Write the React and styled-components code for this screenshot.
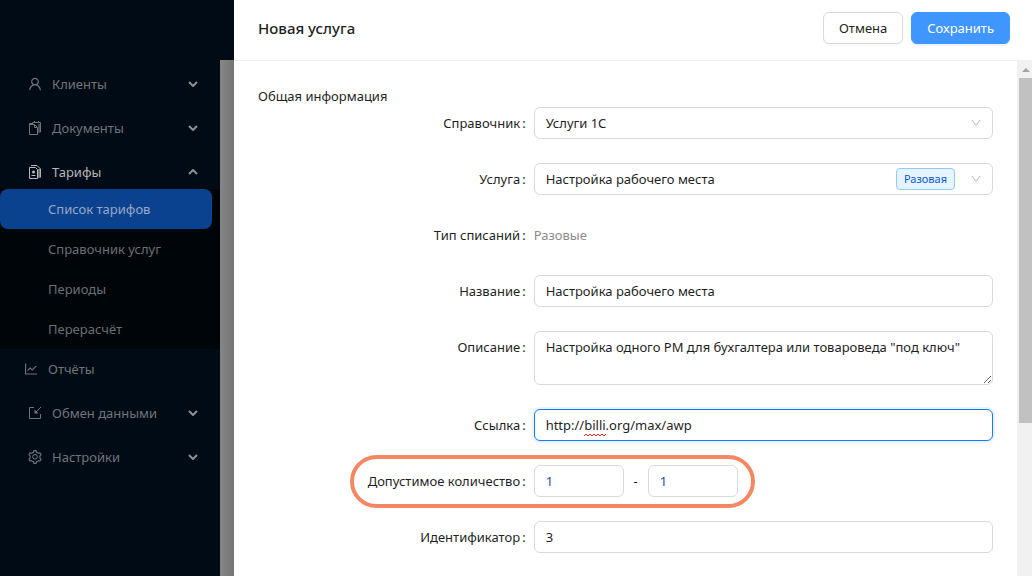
import styled, { createGlobalStyle, css } from 'styled-components'
import {
	AiOutlineUser,
	AiOutlineLineChart,
	AiOutlineSetting,
	AiOutlineDown,
} from 'react-icons/ai'

const GlobalStyle = createGlobalStyle`
	* {
		box-sizing: border-box;
	}

	body {
		margin: 0;
		color: #1f1f1f;
		background: #808080;
		font-family: 'Noto Sans', 'Open Sans', sans-serif;
		font-size: 13px;
		line-height: 22px;
	}

	button, input, select, textarea {
		margin: 0;
		color: inherit;
		font: inherit;
	}
`

const Page = styled.div`
	display: grid;
	grid-template-columns: 220px 14px minmax(0, 1fr);
	grid-template-rows: 60px minmax(0, 1fr);
	height: 100vh;
	overflow: hidden;
	background: linear-gradient(90deg, #858585 220px, #747678 234px);
`

const TopBar = styled.div`
	grid-column: 1 / 3;
	background: #000b15;
`

const SidebarNav = styled.nav`
	grid-row: 2;
	background: #000b15;
`

const Menu = styled.ul`
	margin: 0;
	padding: 2px 0 0;
	list-style: none;
`

const menuItem = css`
	display: flex;
	align-items: center;
	gap: 9px;
	width: 100%;
	border: 0;
	background: none;
	color: #70757a;
	text-align: left;
	text-decoration: none;

	svg {
		flex: none;
		font-size: 16px;
	}
`

const MenuButton = styled.button`
	${menuItem}
	height: 44px;
	padding: 0 22px 0 27px;
	color: ${({ $open }) => ($open ? '#b5b7b9' : '#70757a')};

	span {
		flex: 1;
	}

	svg:last-child {
		color: #8c9196;
		transform: ${({ $open }) => ($open ? 'rotate(180deg)' : 'none')};
	}
`

const MenuLink = styled.a`
	${menuItem}
	height: 40px;
	margin-bottom: 2px;
	padding: 0 23px;
`

const SubMenu = styled.ul`
	margin: -5px 0 0;
	padding: 0;
	background: #000509;
	list-style: none;
`

const SubLink = styled.a`
	display: flex;
	align-items: center;
	height: 40px;
	margin-right: 8px;
	padding-left: 48px;
	border-radius: 8px;
	background: ${({ $active }) => ($active ? '#0b428f' : 'transparent')};
	color: ${({ $active }) => ($active ? '#9aa9c4' : '#6c6f72')};
	text-decoration: none;
`

const Drawer = styled.main`
	display: flex;
	flex-direction: column;
	grid-row: 1 / 3;
	grid-column: 3;
	min-height: 0;
	background: #fff;
`

const Header = styled.header`
	display: flex;
	flex: none;
	align-items: center;
	gap: 8px;
	height: 61px;
	padding: 0 22px 4px 24px;
	border-bottom: 1px solid #efefef;
`

const Title = styled.h1`
	flex: 1;
	margin: 0;
	font-size: 15px;
	font-weight: 500;
`

const Button = styled.button`
	height: 32px;
	padding: 0 15px;
	border: 1px solid ${({ $primary }) => ($primary ? '#4096ff' : '#d9d9d9')};
	border-radius: 6px;
	background: ${({ $primary }) => ($primary ? '#4096ff' : '#fff')};
	color: ${({ $primary }) => ($primary ? '#fff' : '#1f1f1f')};
	box-shadow: 0 2px 0 ${({ $primary }) => ($primary ? '#e9f4ff' : '#fafafa')};
`

const Body = styled.div`
	display: flex;
	flex: 1;
	min-height: 0;
`

const Form = styled.form`
	flex: 1;
	padding: 24px;
`

const FieldRow = styled.div`
	display: grid;
	grid-template-columns: minmax(0, 9fr) minmax(0, 15fr);
	margin-bottom: 24px;
`

const Label = styled.label`
	padding: 5px 8px 5px 0;
	text-align: right;
	white-space: nowrap;

	&::after {
		content: ':';
		margin-left: 2px;
	}
`

const Control = styled.div`
	min-width: 0;
`

const field = css`
	display: block;
	width: 100%;
	height: 32px;
	padding: 4px 11px;
	border: 1px solid #d9d9d9;
	border-radius: 6px;
	outline: 0;
	background: #fff;
`

const Input = styled.input`
	${field}
	width: ${({ $short }) => ($short ? '90px' : '100%')};
	color: ${({ $short }) => ($short ? '#17508c' : 'inherit')};
	border-color: ${({ $focused }) => ($focused ? '#1677ff' : '#d9d9d9')};
	box-shadow: ${({ $focused }) => ($focused ? '0 0 0 2px #e6f4ff' : 'none')};
`

const TextArea = styled.textarea`
	${field}
	height: 54px;
	resize: vertical;
`

const SelectBox = styled.div`
	${field}
	display: flex;
	align-items: center;
	gap: 15px;
	padding: 0 10px 0 11px;

	svg {
		flex: none;
		color: #bfbfbf;
		font-size: 12px;
	}
`

const Select = styled.select`
	flex: 1;
	min-width: 0;
	height: 100%;
	padding: 0;
	border: 0;
	outline: 0;
	background: none;
	appearance: none;
`

const Tag = styled.span`
	padding: 0 7px;
	border: 1px solid #91caff;
	border-radius: 4px;
	background: #e6f4ff;
	color: #0958d9;
	font-size: 11px;
	line-height: 20px;
`

const Output = styled.output`
	display: block;
	padding: 5px 0;
	color: #8c8c8c;
`

const LinkBox = styled.div`
	position: relative;
`

const Spelling = styled.div`
	position: absolute;
	left: 12px;
	bottom: 4px;
	display: flex;
	align-items: flex-end;
	pointer-events: none;
`

const Prefix = styled.span`
	visibility: hidden;
`

const Range = styled.div`
	display: flex;
	align-items: center;

	span {
		width: 24px;
		text-align: center;
	}
`

const Highlighted = styled.div`
	position: relative;
`

const Outline = styled.div`
	position: absolute;
	top: -10px;
	bottom: -11px;
	left: 92px;
	width: 405px;
	border: 4px solid #f58863;
	border-radius: 28px;
	pointer-events: none;
`

const Scrollbar = styled.div`
	display: flex;
	flex: none;
	flex-direction: column;
	align-items: center;
	gap: 6px;
	width: 15px;
	padding: 7px 0 0 2px;
	background: #f1f1f1;
`

const Thumb = styled.div`
	width: 100%;
	height: 68%;
	background: #c1c1c1;
`

function DocumentsIcon() {
	return (
		<svg viewBox="0 0 16 16" width="16" height="16" fill="none" stroke="currentColor">
			<path d="M5 3.5H2.5v11h8V12" />
			<path d="M5.5 4V2.5h8V12H11" />
			<path d="M2.5 4.5h5l3 3V14" />
			<path d="M7.5 4.5v3h3M7.5 1v2M11.5 1v2" />
			<path d="M12 4v7.5" strokeWidth="2" opacity=".6" />
		</svg>
	)
}

function TariffsIcon() {
	return (
		<svg viewBox="0 0 16 16" width="16" height="16" fill="none" stroke="currentColor">
			<path d="M2.5 3.5h6l2 2v9h-8z" />
			<path d="M4 1.5h6l3.5 3.5v8.5" />
			<path d="M12 5v9" strokeWidth="2" opacity=".6" />
			<path d="M4.5 11.5h4" />
			<circle cx="6.5" cy="8" r="1.5" fill="currentColor" stroke="none" />
		</svg>
	)
}

function ImportIcon() {
	return (
		<svg viewBox="0 0 16 16" width="16" height="16" fill="none" stroke="currentColor">
			<path d="M7 2.5H2.5v11h11V9" />
			<path d="M14 2L8.5 7.5" />
			<path d="M7.5 4.5v4h4z" fill="currentColor" stroke="none" />
		</svg>
	)
}

function ArrowIcon() {
	return (
		<svg viewBox="0 0 10 6" width="10" height="6" fill="none" stroke="currentColor" strokeWidth="2">
			<path d="M1 1l4 4 4-4" />
		</svg>
	)
}

const TARIFFS = ['Список тарифов', 'Справочник услуг', 'Периоды', 'Перерасчёт']

function MenuGroup({ icon, title, open, children }) {
	return (
		<li>
			<MenuButton type="button" $open={open} aria-expanded={!!open}>
				{icon}
				<span>{title}</span>
				<ArrowIcon />
			</MenuButton>
			{children}
		</li>
	)
}

function Sidebar() {
	return (
		<SidebarNav>
			<Menu>
				<MenuGroup icon={<AiOutlineUser />} title="Клиенты" />
				<MenuGroup icon={<DocumentsIcon />} title="Документы" />
				<MenuGroup icon={<TariffsIcon />} title="Тарифы" open>
					<SubMenu>
						{TARIFFS.map((title, i) => (
							<li key={title}>
								<SubLink href="#" $active={i === 0}>
									{title}
								</SubLink>
							</li>
						))}
					</SubMenu>
				</MenuGroup>
				<li>
					<MenuLink href="#">
						<AiOutlineLineChart />
						<span>Отчёты</span>
					</MenuLink>
				</li>
				<MenuGroup icon={<ImportIcon />} title="Обмен данными" />
				<MenuGroup icon={<AiOutlineSetting />} title="Настройки" />
			</Menu>
		</SidebarNav>
	)
}

function Field({ id, label, children }) {
	return (
		<FieldRow>
			<Label htmlFor={id}>{label}</Label>
			<Control>{children}</Control>
		</FieldRow>
	)
}

function ServiceForm() {
	return (
		<Form>
			<div>Общая информация</div>
			<Field id="catalog" label="Справочник">
				<SelectBox>
					<Select id="catalog">
						<option>Услуги 1С</option>
					</Select>
					<AiOutlineDown />
				</SelectBox>
			</Field>
			<Field id="service" label="Услуга">
				<SelectBox>
					<Select id="service">
						<option>Настройка рабочего места</option>
					</Select>
					<Tag>Разовая</Tag>
					<AiOutlineDown />
				</SelectBox>
			</Field>
			<Field id="type" label="Тип списаний">
				<Output id="type">Разовые</Output>
			</Field>
			<Field id="name" label="Название">
				<Input id="name" defaultValue="Настройка рабочего места" />
			</Field>
			<Field id="description" label="Описание">
				<TextArea
					id="description"
					defaultValue={'Настройка одного РМ для бухгалтера или товароведа "под ключ"'}
				/>
			</Field>
			<Field id="link" label="Ссылка">
				<LinkBox>
					<Input id="link" defaultValue="http://billi.org/max/awp" spellCheck={false} $focused />
					<Spelling aria-hidden="true">
						<Prefix>http://</Prefix>
						<svg width="22" height="4" fill="none" stroke="#f22" viewBox="0 0 22 4">
							<path d="M0 3l2-2 2 2 2-2 2 2 2-2 2 2 2-2 2 2 2-2 2 2 2-2" />
						</svg>
					</Spelling>
				</LinkBox>
			</Field>
			<Highlighted>
				<Field id="min" label="Допустимое количество">
					<Range>
						<Input id="min" defaultValue="1" $short />
						<span>-</span>
						<Input aria-label="Максимум" defaultValue="1" $short />
					</Range>
				</Field>
				<Outline />
			</Highlighted>
			<Field id="ident" label="Идентификатор">
				<Input id="ident" defaultValue="3" />
			</Field>
		</Form>
	)
}

function App() {
	return (
		<>
			<GlobalStyle />
			<Page>
				<TopBar />
				<Sidebar />
				<Drawer>
					<Header>
						<Title>Новая услуга</Title>
						<Button type="button">Отмена</Button>
						<Button type="button" $primary>
							Сохранить
						</Button>
					</Header>
					<Body>
						<ServiceForm />
						<Scrollbar>
							<svg width="8" height="4" viewBox="0 0 8 4" fill="#a3a3a3">
								<path d="M4 0l4 4H0z" />
							</svg>
							<Thumb />
						</Scrollbar>
					</Body>
				</Drawer>
			</Page>
		</>
	)
}

export default App
